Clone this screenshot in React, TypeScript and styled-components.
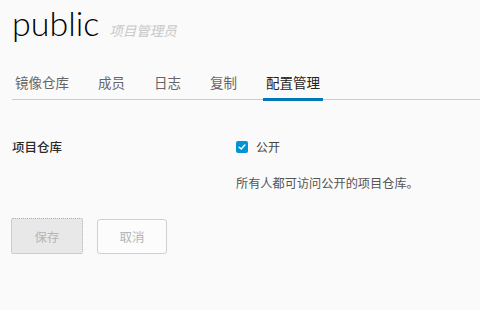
import React from "react";
import styled, { createGlobalStyle } from "styled-components";

const Global = createGlobalStyle`
  html, body { margin: 0; padding: 0; background: #fafafa; }
  body { font-family: "Noto Sans CJK SC", "Noto Sans", sans-serif; color: #333; }
`;

const Page = styled.div`
  width: 480px;
  height: 310px;
  overflow: hidden;
  background: #fafafa;
`;

const Header = styled.div`
  display: flex;
  align-items: baseline;
  gap: 10px;
  padding: 0 0 0 12px;
  height: 48px;
`;

const Title = styled.h1`
  margin: 0;
  font-family: Lato, "Open Sans", sans-serif;
  font-weight: 300;
  font-size: 34px;
  line-height: 46px;
  color: #000;
`;

const Role = styled.span`
  font-style: italic;
  font-size: 13.5px;
  color: #c8c8c8;
`;

const Tabs = styled.nav`
  display: flex;
  gap: 23px;
  margin: 22px 0 0 12px;
  border-bottom: 1px solid #cccccc;
  height: 29px;
`;

const Tab = styled.div<{ $active?: boolean }>`
  position: relative;
  padding: 0 3px;
  font-size: 13.5px;
  line-height: 24px;
  color: ${(p) => (p.$active ? "#222" : "#666")};
  ${(p) =>
    p.$active &&
    `&::after {
      content: "";
      position: absolute;
      left: 0;
      right: 0;
      bottom: -2px;
      height: 3px;
      background: #0079b8;
    }`}
`;

const Form = styled.div`
  display: grid;
  grid-template-columns: 224px 1fr;
  padding: 38px 0 0 12px;
`;

const Label = styled.div`
  font-size: 12.5px;
  font-weight: 500;
  color: #2a2a2a;
  line-height: 18px;
`;

const Field = styled.div`
  display: flex;
  flex-direction: column;
  gap: 17px;
`;

const CheckRow = styled.label`
  display: flex;
  align-items: center;
  gap: 8px;
  font-size: 12px;
  line-height: 18px;
  color: #444;
`;

const Box = styled.span`
  width: 12px;
  height: 12px;
  border-radius: 2px;
  background: #0094d2;
  display: flex;
  align-items: center;
  justify-content: center;
`;

const Help = styled.div`
  font-size: 12.2px;
  color: #555;
  line-height: 20px;
`;

const Buttons = styled.div`
  display: flex;
  gap: 14px;
  padding: 25px 0 0 11px;
  align-items: flex-start;
`;

const Button = styled.button<{ $disabledPrimary?: boolean }>`
  font-family: "Noto Sans CJK SC", sans-serif;
  font-size: 12.5px;
  color: #b5b5b5;
  border-radius: 3px;
  cursor: default;
  ${(p) =>
    p.$disabledPrimary
      ? `width: 72px; height: 36px; background: #e8e8e8; border: 1px dotted #b0b0b0; border-radius: 2px;`
      : `width: 70px; height: 35px; margin-top: 1px; background: #fcfcfc; border: 1px solid #d0d0d0;`}
`;

export default function App() {
  return (
    <Page>
      <Global />
      <Header>
        <Title>public</Title>
        <Role>项目管理员</Role>
      </Header>
      <Tabs>
        <Tab>镜像仓库</Tab>
        <Tab>成员</Tab>
        <Tab>日志</Tab>
        <Tab>复制</Tab>
        <Tab $active>配置管理</Tab>
      </Tabs>
      <Form>
        <Label>项目仓库</Label>
        <Field>
          <CheckRow>
            <Box>
              <svg width="8" height="8" viewBox="0 0 8 8">
                <path d="M1.2 4.2 L3.2 6 L6.8 2" fill="none" stroke="#fff" strokeWidth="1.5" strokeLinecap="round" strokeLinejoin="round" />
              </svg>
            </Box>
            公开
          </CheckRow>
          <Help>所有人都可访问公开的项目仓库。</Help>
        </Field>
      </Form>
      <Buttons>
        <Button $disabledPrimary>保存</Button>
        <Button>取消</Button>
      </Buttons>
    </Page>
  );
}
